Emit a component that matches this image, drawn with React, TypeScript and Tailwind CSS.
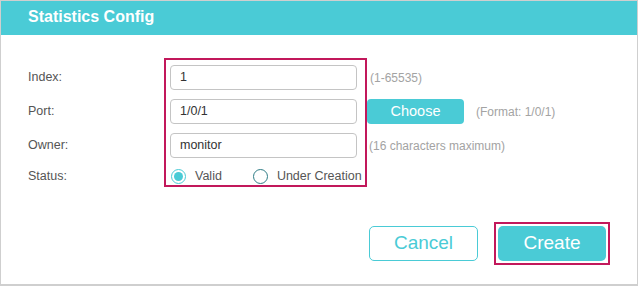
import React from 'react';

const labels = ['Index:', 'Port:', 'Owner:'];

function Radio({ checked, label }: { checked: boolean; label: string }) {
  return (
    <div className="flex items-center">
      <span
        className={
          checked
            ? 'w-[15px] h-[15px] rounded-full border border-[#4acbd6] flex items-center justify-center'
            : 'w-[15px] h-[15px] rounded-full border border-[#2f7d86]'
        }
      >
        {checked && <span className="w-[9px] h-[9px] rounded-full bg-[#4acbd6]" />}
      </span>
      <span className="ml-[9px] text-[12.5px] text-[#555]">{label}</span>
    </div>
  );
}

export default function App() {
  return (
    <div
      className="w-[638px] h-[286px] bg-white border border-[#cfcfcf] border-b-2 flex flex-col"
      style={{ fontFamily: '"Liberation Sans", Arial, sans-serif' }}
    >
      <div className="h-[34px] bg-[#4acbd6] flex items-center pl-[27px] pb-[3px]">
        <span className="text-white text-[16px] font-bold">Statistics Config</span>
      </div>

      <div className="flex mt-[23px] pl-[27px]">
        {/* labels */}
        <div className="w-[136px] flex flex-col gap-[9px] pt-[7px]">
          {labels.map((l) => (
            <div key={l} className="h-[25px] flex items-center text-[12.5px] text-[#555]">
              {l}
            </div>
          ))}
          <div className="h-[18px] flex items-center text-[12.5px] text-[#555]">Status:</div>
        </div>

        {/* highlighted inputs */}
        <div className="w-[203px] border-2 border-[#c2185b] pt-[5px] pl-[4px] pr-[8px] flex flex-col gap-[9px]">
          {['1', '1/0/1', 'monitor'].map((v) => (
            <div
              key={v}
              className="h-[25px] border border-[#c4c4c4] rounded-[4px] flex items-center pl-[9px] text-[12.5px] text-[#333]"
            >
              {v}
            </div>
          ))}
          <div className="h-[18px] flex items-center pl-[1px] gap-[31px] whitespace-nowrap">
            <Radio checked label="Valid" />
            <Radio checked={false} label="Under Creation" />
          </div>
        </div>

        {/* hints */}
        <div className="flex flex-col gap-[9px] pt-[7px] text-[12px] text-[#a3a3a3]">
          <div className="h-[25px] flex items-center pl-[3px]">(1-65535)</div>
          <div className="h-[25px] flex items-center">
            <div className="w-[97px] h-[25px] bg-[#4acbd6] rounded-[4px] flex items-center justify-center text-white text-[14.5px]">
              Choose
            </div>
            <span className="ml-[12px]">(Format: 1/0/1)</span>
          </div>
          <div className="h-[25px] flex items-center pl-[2px]">(16 characters maximum)</div>
        </div>
      </div>

      <div className="flex justify-end items-center mt-[35px] pr-[27px]">
        <div className="w-[109px] h-[35px] border border-[#4acbd6] rounded-[5px] flex items-center justify-center text-[19px] text-[#4acbd6]">
          Cancel
        </div>
        <div className="ml-[16px] border-2 border-[#c2185b] p-[2px]">
          <div className="w-[108px] h-[35px] bg-[#4acbd6] rounded-[5px] flex items-center justify-center text-[19px] text-white">
            Create
          </div>
        </div>
      </div>
    </div>
  );
}
